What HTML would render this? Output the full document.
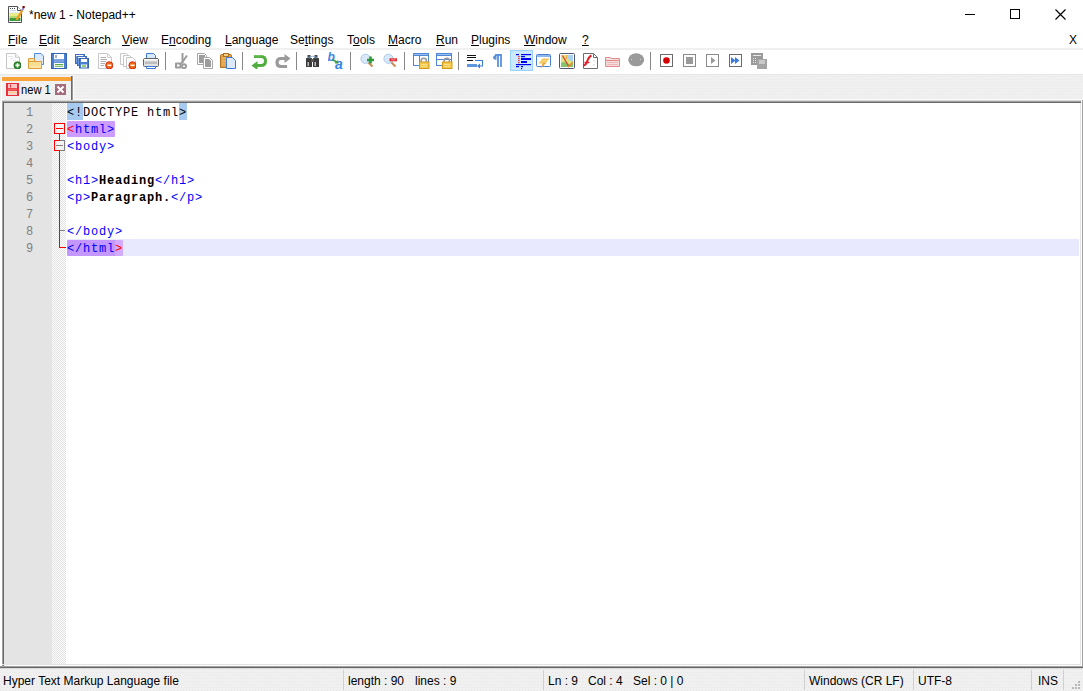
<!DOCTYPE html>
<html><head><meta charset="utf-8">
<style>
*{margin:0;padding:0;box-sizing:border-box}
html,body{width:1083px;height:691px;overflow:hidden;background:#fff;font-family:"Liberation Sans",sans-serif;}
.a{position:absolute}
#title{left:0;top:0;width:1083px;height:30px;background:#fff}
#ttext{left:29px;top:8px;font-size:12px;color:#000;white-space:nowrap}
.mi{position:absolute;top:33px;font-size:12px;color:#000;white-space:nowrap}
.u{text-decoration:underline;text-underline-offset:1px}
#sep1{left:0;top:48px;width:1083px;height:2px;background:#f0f0f0}
#tb{left:0;top:50px;width:1083px;height:24px;background:#fff}
#sep2{left:0;top:74px;width:1083px;height:1px;background:#e6e6e6}
#tabbar{left:0;top:75px;width:1083px;height:26px;background:#f0f0f0}
#editor{left:2px;top:101px;width:1081px;height:567px;background:#fff}
#status{left:0;top:668px;width:1083px;height:23px;background:#f0f0f0}
.st{position:absolute;top:674px;font-size:12px;color:#000;white-space:nowrap}
.code{position:absolute;left:67px;padding-top:2px;font-family:"Liberation Mono",monospace;font-size:12px;letter-spacing:0.8px;white-space:pre;height:17px;line-height:17px}
.ln{position:absolute;padding-top:2px !important;left:4px;width:48px;text-align:left;font-family:"Liberation Mono",monospace;font-size:12px;color:#808080;height:17px;line-height:17px}
</style></head><body>
<div id="title" class="a"></div>

<div class="a" style="left:965px;top:14px;width:10px;height:1px;background:#000"></div>
<div class="a" style="left:1010px;top:9px;width:10px;height:10px;border:1px solid #000"></div>
<svg class="a" style="left:1055px;top:9px" width="11" height="11" viewBox="0 0 11 11"><path d="M0.5 0.5L10.5 10.5M10.5 0.5L0.5 10.5" stroke="#000" stroke-width="1.15"/></svg>

<svg class="a" style="left:7px;top:5px" width="18" height="18" viewBox="0 0 18 18">
<path d="M1.5 1.5H10.5L14.5 5.5V17.5H1.5Z" fill="#fff" stroke="#505050"/>
<path d="M10.5 1.5V5.5H14.5" fill="#fff" stroke="#505050"/>
<rect x="3" y="3" width="1" height="1" fill="#444"/><rect x="5" y="3" width="1" height="1" fill="#444"/><rect x="7" y="3" width="1" height="1" fill="#444"/>
<rect x="3" y="5" width="6" height="1" fill="#c8dcf0"/><rect x="2.5" y="7" width="10" height="1" fill="#e0ecf8"/>
<rect x="2.5" y="8" width="11" height="3" fill="#e8ec8a"/>
<rect x="2.5" y="11" width="11" height="2" fill="#b8d870"/>
<rect x="2.5" y="13" width="11" height="3" fill="#3c9a3c"/>
<path d="M9.5 15L15.5 5" stroke="#f09a20" stroke-width="2.4"/>
<path d="M15.2 5.2L16.6 3" stroke="#8080d0" stroke-width="1.6"/>
<rect x="15.5" y="1" width="2.2" height="2.2" fill="#800000"/>
</svg>
<div id="ttext" class="a">*new 1 - Notepad++</div>

<div class="mi" style="left:8px"><span class="u">F</span>ile</div>
<div class="mi" style="left:39px"><span class="u">E</span>dit</div>
<div class="mi" style="left:73px"><span class="u">S</span>earch</div>
<div class="mi" style="left:122px"><span class="u">V</span>iew</div>
<div class="mi" style="left:161px">E<span class="u">n</span>coding</div>
<div class="mi" style="left:225px"><span class="u">L</span>anguage</div>
<div class="mi" style="left:290px">Se<span class="u">t</span>tings</div>
<div class="mi" style="left:347px">T<span class="u">o</span>ols</div>
<div class="mi" style="left:388px"><span class="u">M</span>acro</div>
<div class="mi" style="left:436px"><span class="u">R</span>un</div>
<div class="mi" style="left:471px"><span class="u">P</span>lugins</div>
<div class="mi" style="left:524px"><span class="u">W</span>indow</div>
<div class="mi" style="left:582px"><span class="u">?</span></div>
<div class="mi" style="left:1069px;color:#000">X</div>

<div id="sep1" class="a"></div>
<div id="tb" class="a"></div>
<!--ICONS-->
<div class="a" style="left:510px;top:50px;width:23px;height:21px;background:#cce8ff;border:1px solid #99d1ff"></div>
<div class="a" style="left:165px;top:52px;width:1px;height:18px;background:#888888"></div>
<div class="a" style="left:242px;top:52px;width:1px;height:18px;background:#888888"></div>
<div class="a" style="left:296px;top:52px;width:1px;height:18px;background:#888888"></div>
<div class="a" style="left:350px;top:52px;width:1px;height:18px;background:#888888"></div>
<div class="a" style="left:404px;top:52px;width:1px;height:18px;background:#888888"></div>
<div class="a" style="left:458px;top:52px;width:1px;height:18px;background:#888888"></div>
<div class="a" style="left:650px;top:52px;width:1px;height:18px;background:#888888"></div>
<svg class="a" style="left:5px;top:53px" width="16" height="16" viewBox="0 0 16 16">
<path d="M1.5 0.5H10.5L14.5 4.5V15.5H1.5Z" fill="#fff" stroke="#c4c4c4"/>
<path d="M10.5 0.5V4.5H14.5" fill="#f0f0f0" stroke="#d0d0d0"/>
<path d="M3 3.5H8M5 5.5H9M8 7.5H11" stroke="#e8e8e8"/>
<circle cx="12.5" cy="12.3" r="3.6" fill="#2f8f2f" stroke="#1b6a1b" stroke-width="0.8"/>
<path d="M12.5 10.2V14.4M10.4 12.3H14.6" stroke="#fff" stroke-width="1.6"/>
</svg>
<svg class="a" style="left:28px;top:53px" width="17" height="16" viewBox="0 0 17 16">
<path d="M6.5 0.5H13L15.5 3V11.5H6.5Z" fill="#dbe9fb" stroke="#4f8ae0"/>
<path d="M0.5 5.5H6.5V8.5H13.5V15.5H0.5Z" fill="#fbe7a8" stroke="#e39b35"/>
<path d="M1 8.5H13" stroke="#e39b35"/>
<path d="M2 10H12M2 12H12" stroke="#f7d57a" stroke-width="1.2"/>
</svg>
<svg class="a" style="left:51px;top:53px" width="16" height="16" viewBox="0 0 16 16">
<rect x="0.5" y="0.5" width="15" height="15" fill="#4a7fd0" stroke="#3565b5"/>
<rect x="3" y="1" width="10" height="5" fill="#fff"/>
<rect x="4.5" y="2" width="1" height="3" fill="#3565b5"/>
<rect x="3" y="6" width="10" height="3.5" fill="#7aa3e0"/>
<rect x="3" y="10" width="10" height="5" fill="#fff"/>
<path d="M4 11.5H12M4 13.3H12" stroke="#5aaa46" stroke-width="1.1"/>
</svg>
<svg class="a" style="left:74px;top:53px" width="16" height="16" viewBox="0 0 16 16">
<rect x="1.5" y="1.5" width="9" height="9" fill="#6f9ae0" stroke="#3d6fc0"/>
<rect x="3.5" y="3.5" width="9" height="9" fill="#6f9ae0" stroke="#3d6fc0"/>
<rect x="5.5" y="5.5" width="9" height="9.5" fill="#4a7fd0" stroke="#3565b5"/>
<rect x="7" y="6" width="6" height="3" fill="#fff"/>
<rect x="7" y="11.5" width="6" height="3" fill="#fff"/>
<rect x="8" y="12.3" width="4" height="1.5" fill="#6cbf3c"/>
<path d="M2 2.5H9M4 4.5H11" stroke="#fff" stroke-width="1"/>
</svg>
<svg class="a" style="left:97px;top:53px" width="16" height="16" viewBox="0 0 16 16">
<path d="M1.5 0.5H10.5L14.5 4.5V15.5H1.5Z" fill="#fff" stroke="#c8c8c8"/>
<path d="M10.5 0.5V4.5H14.5" fill="none" stroke="#d0d0d0"/>
<path d="M3.5 4.5H9M3.5 6.5H10M3.5 8.5H9M3.5 10.5H8M3.5 12.5H7" stroke="#9a9a9a" stroke-width="0.8"/>
<circle cx="12.3" cy="12.3" r="3.6" fill="#f06a10" stroke="#d02010" stroke-width="0.9"/>
<path d="M10.3 12.3H14.3" stroke="#fff" stroke-width="1.5"/>
</svg>
<svg class="a" style="left:120px;top:53px" width="16" height="16" viewBox="0 0 16 16">
<path d="M0.5 0.5H6.5L8.5 2.5V11.5H0.5Z" fill="#fff" stroke="#c8c8c8"/>
<path d="M3.5 2.5H9.5L11.5 4.5V13.5H3.5Z" fill="#fff" stroke="#c8c8c8"/>
<path d="M6.5 4.5H12.5L15.5 7.5V15.5H6.5Z" fill="#fff" stroke="#c8c8c8"/>
<circle cx="12.5" cy="12.3" r="3.6" fill="#f06a10" stroke="#d02010" stroke-width="0.9"/>
<path d="M10.5 12.3H14.5" stroke="#fff" stroke-width="1.5"/>
</svg>
<svg class="a" style="left:143px;top:53px" width="16" height="16" viewBox="0 0 16 16">
<path d="M3.5 0.5H10.5L12.5 2.5V7.5H3.5Z" fill="#d8e9fb" stroke="#3f7ad6"/>
<path d="M0.5 7Q0.5 5.5 2 5.5H14Q15.5 5.5 15.5 7V12.5Q15.5 13.5 14.5 13.5H1.5Q0.5 13.5 0.5 12.5Z" fill="#e2e2e2" stroke="#646464"/>
<rect x="1" y="6" width="14" height="1.5" fill="#fafafa"/>
<rect x="2" y="8.5" width="12" height="2.5" fill="#bdbdbd"/>
<path d="M3.5 13.5H12.5V15.5H3.5Z" fill="#fff" stroke="#3f7ad6"/>
</svg>
<svg class="a" style="left:175px;top:53px" width="16" height="16" viewBox="0 0 16 16">
<path d="M7.5 0V10" stroke="#9c9c9c" stroke-width="2"/>
<path d="M12 2.5L6 11" stroke="#9c9c9c" stroke-width="2"/>
<path d="M1 10.5H5.5V14.5H1Z" fill="none" stroke="#9c9c9c" stroke-width="2" stroke-linejoin="round"/>
<circle cx="9" cy="13.2" r="2" fill="none" stroke="#9c9c9c" stroke-width="2"/>
</svg>
<svg class="a" style="left:197px;top:53px" width="16" height="16" viewBox="0 0 16 16">
<path d="M0.5 0.5H7.5L9.5 2.5V11.5H0.5Z" fill="#fff" stroke="#a8a8a8"/>
<rect x="2" y="2" width="6" height="8" fill="#9c9c9c"/>
<path d="M6.5 4.5H12.5L15.5 7.5V15.5H6.5Z" fill="#fff" stroke="#a8a8a8"/>
<path d="M8 6H12L14 8V14H8Z" fill="#9c9c9c"/>
</svg>
<svg class="a" style="left:220px;top:53px" width="16" height="16" viewBox="0 0 16 16">
<path d="M0.5 2.5Q0.5 1.5 1.5 1.5H10.5Q11.5 1.5 11.5 2.5V14.5H0.5Z" fill="#e3a24a" stroke="#b0701f"/>
<rect x="3.5" y="0.5" width="5" height="3" fill="#f2d28a" stroke="#b0701f"/>
<path d="M2 5H10M2 8H6M2 11H5" stroke="#f0c070" stroke-width="1"/>
<path d="M6.5 4.5H12.5L15.5 7.5V15.5H6.5Z" fill="#dde9fb" stroke="#3f7ad6"/>
</svg>
<svg class="a" style="left:251px;top:53px" width="16" height="16" viewBox="0 0 16 16">
<path d="M3 3.5H10Q14.5 3.5 14.5 8Q14.5 12.5 10 12.5H6" fill="none" stroke="#4fae3f" stroke-width="3"/>
<path d="M0.5 12.5L6.5 8V17Z" fill="#4fae3f"/>
<path d="M3 2.8H10" stroke="#8fd07f" stroke-width="0.8"/>
</svg>
<svg class="a" style="left:275px;top:54px" width="16" height="16" viewBox="0 0 16 16">
<path d="M12 12.5H6Q2 12.5 2 8.5Q2 4.5 6 4.5H10" fill="none" stroke="#9a9a9a" stroke-width="3.2"/>
<path d="M15.5 4.5L9.5 0V9Z" fill="#9a9a9a"/>
</svg>
<svg class="a" style="left:305px;top:53px" width="16" height="16" viewBox="0 0 16 16">
<rect x="1" y="5" width="6" height="9" rx="0.5" fill="#3a3a3a"/>
<rect x="8" y="5" width="6" height="9" rx="0.5" fill="#3a3a3a"/>
<rect x="2.5" y="2" width="3" height="4" fill="#4a4a4a"/>
<rect x="9.5" y="2" width="3" height="4" fill="#4a4a4a"/>
<rect x="6" y="6" width="3" height="3" fill="#555"/>
<rect x="2.5" y="9" width="1.5" height="4" fill="#bbb"/>
<rect x="9.5" y="9" width="1.5" height="4" fill="#bbb"/>
<path d="M3 4.5Q7.5 2 12 4.5" stroke="#6fa8d8" stroke-width="0.8" fill="none"/>
</svg>
<svg class="a" style="left:328px;top:52px" width="17" height="17" viewBox="0 0 17 17">
<text x="-0.5" y="9" font-family="Liberation Sans" font-style="italic" font-weight="bold" font-size="12" fill="#3a86e8">b</text>
<text x="7" y="16.5" font-family="Liberation Sans" font-style="italic" font-weight="bold" font-size="14" fill="#3a86e8">a</text>
<path d="M4.5 7.5L9 10.5" stroke="#3aa040" stroke-width="1.6"/>
<path d="M10.5 11.5L6.5 11.5L9.5 8Z" fill="#3aa040"/>
</svg>
<svg class="a" style="left:360px;top:53px" width="16" height="16" viewBox="0 0 16 16">
<path d="M8 9L12.5 13.5" stroke="#c8915a" stroke-width="2.2"/>
<circle cx="5.5" cy="5.8" r="4.6" fill="#d8e8f8" stroke="#a9c9ea" stroke-width="1"/>
<path d="M10.5 3.5V10.5M7 7H14" stroke="#2e9a3a" stroke-width="2.6"/>
</svg>
<svg class="a" style="left:383px;top:53px" width="16" height="16" viewBox="0 0 16 16">
<path d="M8 9L12.5 13.5" stroke="#c8915a" stroke-width="2.2"/>
<circle cx="5.5" cy="5.8" r="4.6" fill="#d8e8f8" stroke="#a9c9ea" stroke-width="1"/>
<rect x="6.5" y="5.3" width="7.5" height="3" fill="#e2242a"/>
<path d="M8 6.8H12.5" stroke="#f8b0b0" stroke-width="0.8"/>
</svg>
<svg class="a" style="left:413px;top:53px" width="17" height="16" viewBox="0 0 17 16">
<rect x="0.5" y="0.5" width="15" height="12" fill="#fff" stroke="#4f86d6"/>
<rect x="0.5" y="0.5" width="15" height="2" fill="#9cc0ee" stroke="#4f86d6"/>
<path d="M6.5 2.5V12.5" stroke="#4f86d6"/>
<path d="M8.2 9V7.5Q8.2 5.2 10.8 5.2Q13.4 5.2 13.4 7.5V9" fill="none" stroke="#9a9a9a" stroke-width="1.6"/>
<rect x="6.5" y="9" width="9.5" height="6.5" fill="#f3c94a" stroke="#d49a20" stroke-width="1"/>
<path d="M8 11.5H14M8 13.5H14" stroke="#fbe49a" stroke-width="0.8"/>
</svg>
<svg class="a" style="left:436px;top:53px" width="17" height="16" viewBox="0 0 17 16">
<rect x="0.5" y="0.5" width="15" height="12" fill="#fff" stroke="#4f86d6"/>
<rect x="0.5" y="0.5" width="15" height="2" fill="#9cc0ee" stroke="#4f86d6"/>
<path d="M0.5 6.5H15.5" stroke="#4f86d6"/>
<path d="M8.2 9V7.5Q8.2 5.2 10.8 5.2Q13.4 5.2 13.4 7.5V9" fill="none" stroke="#9a9a9a" stroke-width="1.6"/>
<rect x="6.5" y="9" width="9.5" height="6.5" fill="#f3c94a" stroke="#d49a20" stroke-width="1"/>
<path d="M8 11.5H14M8 13.5H14" stroke="#fbe49a" stroke-width="0.8"/>
</svg>
<svg class="a" style="left:466px;top:53px" width="17" height="16" viewBox="0 0 17 16">
<path d="M1 2.5H10M1 4.5H10M1 7.5H7" stroke="#111" stroke-width="1.1"/>
<rect x="1" y="11" width="10" height="3" fill="#5d96dc"/>
<path d="M9 7.5H16.5V13H13" fill="none" stroke="#3d7fd6" stroke-width="1.1"/>
<path d="M11 13L14 10.5V15.5Z" fill="#3d7fd6"/>
</svg>
<svg class="a" style="left:490px;top:53px" width="12" height="16" viewBox="0 0 12 16">
<path d="M5 2H11V14" fill="none" stroke="#5b92dc" stroke-width="1.8"/>
<path d="M8 2V14" stroke="#5b92dc" stroke-width="1.8"/>
<path d="M5.5 2.2Q3 2.2 3 4.5Q3 6.8 5.5 6.8H6.5V2.2Z" fill="#5b92dc"/>
</svg>
<svg class="a" style="left:514px;top:53px" width="18" height="17" viewBox="0 0 18 17">
<rect x="2" y="1" width="3" height="1.2" fill="#0000f0"/>
<rect x="7" y="1" width="10" height="1.2" fill="#0000f0"/>
<rect x="7" y="3" width="4" height="1.2" fill="#0000f0"/>
<rect x="7" y="5" width="10" height="2" fill="#0000f0"/>
<rect x="7" y="8" width="6" height="2" fill="#0000f0"/>
<rect x="2" y="11" width="15" height="1.2" fill="#0000f0"/>
<rect x="2" y="13" width="3" height="1.2" fill="#0000f0"/>
<rect x="7" y="13" width="2" height="1.2" fill="#0000f0"/>
<rect x="7" y="15" width="1.2" height="1.2" fill="#0000f0"/>
<rect x="4.3" y="3" width="1.2" height="1.2" fill="#e00000"/>
<rect x="4.3" y="5" width="1.2" height="1.2" fill="#e00000"/>
<rect x="4.3" y="7" width="1.2" height="1.2" fill="#e00000"/>
<rect x="4.3" y="9" width="1.2" height="1.2" fill="#e00000"/>
</svg>
<svg class="a" style="left:536px;top:53px" width="16" height="16" viewBox="0 0 16 16">
<rect x="0.5" y="1.5" width="14" height="12" rx="1" fill="#fff" stroke="#4a80d4"/>
<rect x="1" y="2" width="13" height="2" fill="#8fb6ea"/>
<path d="M2.5 10.5L6.5 5.5H13.5L9.5 10.5Z" fill="#f2c455"/>
<path d="M7 9.5L4.5 15.5L10.5 9.5Z" fill="#f0a030"/>
<path d="M6 7.5H11.5M4.5 9H10" stroke="#f9dc8a" stroke-width="0.8"/>
</svg>
<svg class="a" style="left:559px;top:53px" width="16" height="16" viewBox="0 0 16 16">
<rect x="0.5" y="0.5" width="15" height="15" rx="1" fill="#fff" stroke="#4f5578"/>
<rect x="2" y="2" width="12" height="12" fill="#dfe27a"/>
<path d="M8 2H14V9Q11 8 8 5Z" fill="#a9d2f2"/>
<path d="M2 10Q5 8 8 10Q11 12 14 10V14H2Z" fill="#86c46c"/>
<path d="M3.5 2.5L10 14" stroke="#e83a3a" stroke-width="1.3"/>
<path d="M14 9L9 14" stroke="#f08a20" stroke-width="1.2"/>
<path d="M7.5 2V6" stroke="#f0a030" stroke-width="0.8"/>
</svg>
<svg class="a" style="left:582px;top:53px" width="16" height="16" viewBox="0 0 16 16">
<path d="M1.5 0.5H11.5L15.5 4.5V15.5H1.5Z" fill="#fff" stroke="#6e6e6e"/>
<path d="M11.5 0.5V4.5H15.5" fill="none" stroke="#6e6e6e"/>
<path d="M1 12.5Q3.5 12.5 5 9Q6.5 4 9.5 2.5" fill="none" stroke="#e0202a" stroke-width="2"/>
<path d="M2.5 9.5L7.5 9.5" stroke="#e0202a" stroke-width="1.4"/>
<path d="M12 7V9M12 11V13" stroke="#ccc" stroke-width="0.8"/>
</svg>
<svg class="a" style="left:605px;top:53px" width="16" height="16" viewBox="0 0 16 16">
<path d="M0.5 4.5H5.5L6.5 5.5H14.5V13.5H0.5Z" fill="#f7dede" stroke="#e08a8a"/>
<path d="M1 7.5H14" stroke="#e08a8a"/>
<path d="M2 9.5H13M2 11.5H13" stroke="#eeb8b8" stroke-width="1"/>
</svg>
<svg class="a" style="left:628px;top:53px" width="17" height="15" viewBox="0 0 17 15">
<ellipse cx="8.2" cy="6.8" rx="8" ry="6.5" fill="#9a9a9a"/>
<rect x="3" y="6" width="1" height="1" fill="#d0d0d0"/>
<rect x="12" y="6" width="1" height="1" fill="#d0d0d0"/>
</svg>
<svg class="a" style="left:660px;top:54px" width="13" height="13" viewBox="0 0 13 13">
<rect x="0.5" y="0.5" width="12" height="12" fill="#fff" stroke="#6a6a6a"/>
<circle cx="6.5" cy="6.5" r="3.3" fill="#d40000"/>
</svg>
<svg class="a" style="left:683px;top:54px" width="13" height="13" viewBox="0 0 13 13">
<rect x="0.5" y="0.5" width="12" height="12" fill="#fff" stroke="#8a8a8a"/>
<rect x="3" y="3" width="7" height="7" fill="#9a9a9a"/>
</svg>
<svg class="a" style="left:706px;top:54px" width="13" height="13" viewBox="0 0 13 13">
<rect x="0.5" y="0.5" width="12" height="12" fill="#fff" stroke="#8a8a8a"/>
<path d="M5 3L9.5 6.5L5 10Z" fill="#9a9a9a"/>
</svg>
<svg class="a" style="left:729px;top:54px" width="13" height="13" viewBox="0 0 13 13">
<rect x="0.5" y="0.5" width="12" height="12" fill="#fff" stroke="#6a6a6a"/>
<path d="M2 3L6.5 6.5L2 10Z M6 3L10.5 6.5L6 10Z" fill="#3a7ade"/>
</svg>
<svg class="a" style="left:751px;top:53px" width="16" height="16" viewBox="0 0 16 16">
<rect x="0" y="0" width="12" height="12" fill="#9a9a9a"/>
<path d="M2 2.5H10" stroke="#fff" stroke-width="0.8"/>
<path d="M2.5 5V11M4.5 5V11" stroke="#e6e6e6" stroke-width="1" stroke-dasharray="1 1"/>
<rect x="6" y="6" width="10" height="10" fill="#a4a4a4"/>
<path d="M8 8H14M8 10H14" stroke="#f0f0f0" stroke-width="1"/>
</svg>
<!--/ICONS-->
<div id="sep2" class="a"></div>
<div id="tabbar" class="a"></div><svg class="a" style="left:0;top:75px" width="1083" height="26"><defs><pattern id="dp" width="6" height="6" patternUnits="userSpaceOnUse"><rect width="6" height="6" fill="#f0f0f0"/><rect x="1" y="1" width="1" height="1" fill="#e6e6e6"/><rect x="4" y="1" width="1" height="1" fill="#e6e6e6"/><rect x="0" y="4" width="1" height="1" fill="#e6e6e6"/><rect x="3" y="4" width="1" height="1" fill="#e6e6e6"/></pattern></defs><rect width="1083" height="26" fill="url(#dp)"/></svg>
<div class="a" style="left:1px;top:76px;width:1px;height:25px;background:#fff"></div>
<svg class="a" style="left:2px;top:76px" width="69" height="25"><rect width="69" height="25" fill="#f4f4f4"/><rect width="69" height="25" fill="url(#dp)" opacity="0.7"/></svg>
<div class="a" style="left:2px;top:77px;width:69px;height:4px;background:#f9a33a"></div>
<div class="a" style="left:71px;top:76px;width:1px;height:24px;background:#6a6a6a"></div><div class="a" style="left:72px;top:76px;width:1px;height:24px;background:#9a9a9a"></div><div class="a" style="left:73px;top:76px;width:1px;height:24px;background:#fafafa"></div><div class="a" style="left:73px;top:99px;width:1010px;height:1px;background:#fafafa"></div>

<svg class="a" style="left:6px;top:83px" width="13" height="13" viewBox="0 0 13 13">
<rect x="0" y="0" width="13" height="13" fill="#e8303a"/>
<rect x="2" y="1" width="9" height="4" fill="#f8c8c8"/>
<rect x="4" y="1.5" width="1" height="3" fill="#e8303a"/>
<rect x="2" y="5.5" width="9" height="2" fill="#f06060"/>
<rect x="2" y="8" width="9" height="4" fill="#f8d0d0"/>
<path d="M2.5 9.5H10.5" stroke="#f0d060" stroke-width="0.8"/>
</svg>
<svg class="a" style="left:55px;top:84px" width="11" height="11" viewBox="0 0 11 11">
<rect x="0" y="0" width="11" height="11" fill="#a56a7c"/>
<path d="M2.5 2.5L8.5 8.5M8.5 2.5L2.5 8.5" stroke="#fff" stroke-width="2"/>
</svg>
<div class="a" style="left:21px;top:83px;font-size:12px;color:#000;white-space:nowrap;transform:scaleX(0.93);transform-origin:0 0">new 1</div>

<div id="editor" class="a"></div>
<div class="a" style="left:2px;top:100px;width:1079px;height:1px;background:#d8d8d8"></div>
<div class="a" style="left:2px;top:101px;width:1079px;height:1px;background:#a0a0a0"></div>
<div class="a" style="left:3px;top:102px;width:1078px;height:1px;background:#696969"></div>
<div class="a" style="left:2px;top:101px;width:1px;height:565px;background:#a0a0a0"></div>
<div class="a" style="left:3px;top:102px;width:1px;height:564px;background:#696969"></div>
<div class="a" style="left:1080px;top:103px;width:1px;height:562px;background:#e3e3e3"></div>
<div class="a" style="left:2px;top:664px;width:1079px;height:1px;background:#e3e3e3"></div>
<div class="a" style="left:1082px;top:100px;width:1px;height:568px;background:#a0a0a0"></div>
<div class="a" style="left:0px;top:666px;width:1083px;height:1px;background:#a0a0a0"></div>
<div class="a" style="left:0px;top:667px;width:1083px;height:1px;background:#696969"></div>


<div id="lnm" class="a" style="left:4px;top:103px;width:48px;height:561px;background:#e4e4e4"></div>
<div id="fold" class="a" style="left:52px;top:103px;width:14px;height:561px;background-color:#fdfdfd;background-image:linear-gradient(45deg,#e2e2e2 25%,transparent 25%,transparent 75%,#e2e2e2 75%),linear-gradient(45deg,#e2e2e2 25%,transparent 25%,transparent 75%,#e2e2e2 75%);background-size:2px 2px;background-position:0 0,1px 1px"></div>

<div class="a" style="left:54px;top:123px;width:11px;height:11px;border:1px solid #f00;background:#f4f4f4"></div>
<div class="a" style="left:56px;top:128px;width:7px;height:1px;background:#f00"></div>
<div class="a" style="left:59px;top:134px;width:1px;height:6px;background:#f00"></div>
<div class="a" style="left:54px;top:140px;width:11px;height:11px;border:1px solid #808080;background:#f4f4f4"></div>
<div class="a" style="left:54px;top:140px;width:1px;height:11px;background:#f00"></div>
<div class="a" style="left:54px;top:140px;width:6px;height:1px;background:#f00"></div>
<div class="a" style="left:54px;top:150px;width:6px;height:1px;background:#f00"></div>
<div class="a" style="left:56px;top:145px;width:7px;height:1px;background:#808080"></div>
<div class="a" style="left:59px;top:151px;width:1px;height:97px;background:#f00"></div>
<div class="a" style="left:60px;top:230px;width:5px;height:1px;background:#808080"></div>
<div class="a" style="left:60px;top:247px;width:6px;height:1px;background:#f00"></div>
<div class="a" style="left:67px;top:239px;width:1012px;height:17px;background:#e8e8ff"></div>
<div class="a" style="left:67px;top:103px;width:16px;height:17px;background:#a6caf0"></div>
<div class="a" style="left:179px;top:103px;width:8px;height:17px;background:#a6caf0"></div>
<div class="a" style="left:67px;top:121px;width:48px;height:16px;background:#cc9cff;border-radius:1px"></div>
<div class="a" style="left:67px;top:240px;width:48px;height:16px;background:#c497ff;border-radius:1px 0 0 1px"></div><div class="a" style="left:115px;top:240px;width:8px;height:16px;background:#d2aaff;border-radius:0 1px 1px 0"></div>
<div class="ln" style="top:103px;left:26px;width:8px;padding:0">1</div>
<div class="code" style="top:103px"><span style="color:#000">&lt;!DOCTYPE html&gt;</span></div>
<div class="ln" style="top:120px;left:26px;width:8px;padding:0">2</div>
<div class="code" style="top:120px"><span style="color:#f00">&lt;</span><span style="color:#00f">html&gt;</span></div>
<div class="ln" style="top:137px;left:26px;width:8px;padding:0">3</div>
<div class="code" style="top:137px"><span style="color:#00f">&lt;body&gt;</span></div>
<div class="ln" style="top:154px;left:26px;width:8px;padding:0">4</div>
<div class="ln" style="top:171px;left:26px;width:8px;padding:0">5</div>
<div class="code" style="top:171px"><span style="color:#00f">&lt;h1&gt;</span><b>Heading</b><span style="color:#00f">&lt;/h1&gt;</span></div>
<div class="ln" style="top:188px;left:26px;width:8px;padding:0">6</div>
<div class="code" style="top:188px"><span style="color:#00f">&lt;p&gt;</span><b>Paragraph.</b><span style="color:#00f">&lt;/p&gt;</span></div>
<div class="ln" style="top:205px;left:26px;width:8px;padding:0">7</div>
<div class="ln" style="top:222px;left:26px;width:8px;padding:0">8</div>
<div class="code" style="top:222px"><span style="color:#00f">&lt;/body&gt;</span></div>
<div class="ln" style="top:239px;left:26px;width:8px;padding:0">9</div>
<div class="code" style="top:239px"><span style="color:#00f">&lt;/html</span><span style="color:#f00">&gt;</span></div>
<div id="status" class="a"></div><svg class="a" style="left:0;top:668px" width="1083" height="23"><rect width="1083" height="23" fill="url(#dp)"/></svg>
<div class="st" style="left:3px">Hyper Text Markup Language file</div>
<div class="a" style="left:343px;top:670px;width:1px;height:20px;background:#d0d0d0"></div>
<div class="st" style="left:348px">length : 90</div><div class="st" style="left:415px">lines : 9</div>
<div class="a" style="left:543px;top:670px;width:1px;height:20px;background:#d0d0d0"></div>
<div class="st" style="left:548px">Ln : 9</div><div class="st" style="left:588px">Col : 4</div><div class="st" style="left:633px">Sel : 0 | 0</div>
<div class="a" style="left:804px;top:670px;width:1px;height:20px;background:#d0d0d0"></div>
<div class="st" style="left:809px">Windows (CR LF)</div>
<div class="a" style="left:913px;top:670px;width:1px;height:20px;background:#d0d0d0"></div>
<div class="st" style="left:918px">UTF-8</div>
<div class="a" style="left:1031px;top:670px;width:1px;height:20px;background:#d0d0d0"></div>
<div class="st" style="left:1038px">INS</div>
<div class="a" style="left:1063px;top:670px;width:1px;height:20px;background:#d0d0d0"></div>



<svg class="a" style="left:1070px;top:680px" width="12" height="10" viewBox="0 0 12 10">
<rect x="8" y="1" width="2" height="2" fill="#b8b8b8"/>
<rect x="5" y="4" width="2" height="2" fill="#b8b8b8"/>
<rect x="8" y="4" width="2" height="2" fill="#b8b8b8"/>
<rect x="2" y="7" width="2" height="2" fill="#b8b8b8"/>
<rect x="5" y="7" width="2" height="2" fill="#b8b8b8"/>
<rect x="8" y="7" width="2" height="2" fill="#b8b8b8"/>
</svg>
<div class="a" style="left:0px;top:668px;width:1083px;height:1px;background:#dadada"></div>
</body></html>
